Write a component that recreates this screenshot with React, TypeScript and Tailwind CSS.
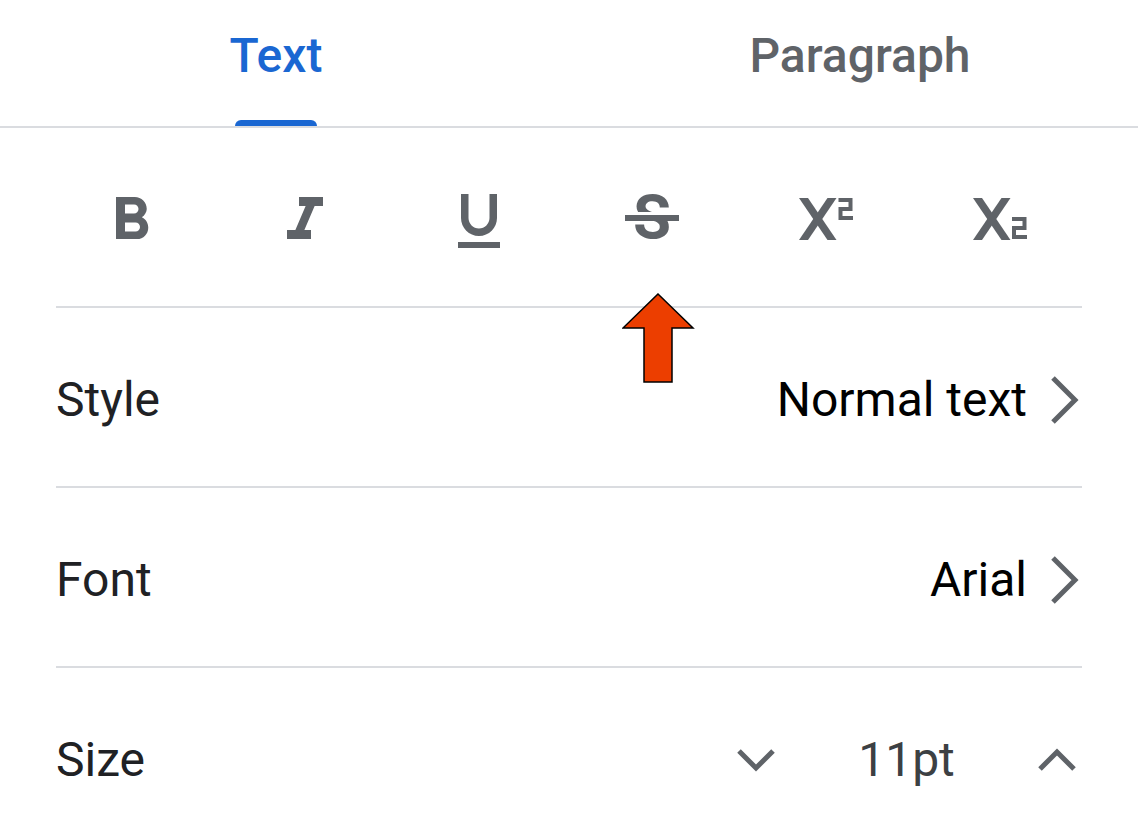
import React from 'react';

const ICON = '#5f6368';

const formatIcons: { key: string; d: string }[] = [
  {
    key: 'bold',
    d: 'M15.6 10.79c.97-.67 1.65-1.77 1.65-2.79 0-2.26-1.75-4-4-4H7v14h7.04c2.09 0 3.71-1.7 3.71-3.79 0-1.52-.86-2.82-2.15-3.42zM10 6.5h3c.83 0 1.5.67 1.5 1.5s-.67 1.5-1.5 1.5h-3v-3zm3.5 9H10v-3h3.5c.83 0 1.5.67 1.5 1.5s-.67 1.5-1.5 1.5z',
  },
  { key: 'italic', d: 'M10 4v3h2.21l-3.42 8H6v3h8v-3h-2.21l3.42-8H18V4z' },
  {
    key: 'underline',
    d: 'M12 17c3.31 0 6-2.69 6-6V3h-2.5v8c0 1.93-1.57 3.5-3.5 3.5S8.5 12.93 8.5 11V3H6v8c0 3.31 2.69 6 6 6zm-7 2v2h14v-2H5z',
  },
  {
    key: 'strike',
    d: 'M7.24 8.75c-.26-.48-.39-1.03-.39-1.67 0-.61.13-1.16.4-1.67.26-.5.63-.93 1.11-1.29.48-.35 1.05-.63 1.7-.83.66-.19 1.39-.29 2.18-.29.81 0 1.54.11 2.21.34.66.22 1.23.54 1.69.94.47.4.83.88 1.08 1.43.25.55.38 1.15.38 1.81h-3.01c0-.31-.05-.59-.15-.85-.09-.27-.24-.49-.44-.68-.2-.19-.45-.33-.75-.44-.3-.1-.66-.16-1.06-.16-.39 0-.74.04-1.03.13-.29.09-.53.21-.72.36-.19.16-.34.34-.44.55-.1.21-.15.43-.15.66 0 .48.25.88.74 1.21.38.25.77.48 1.41.7H7.39c-.05-.08-.11-.17-.15-.25zM21 12v-2H3v2h9.62c.18.07.4.14.55.2.37.17.66.34.87.51.21.17.35.36.43.57.07.2.11.43.11.69 0 .23-.05.45-.14.66-.09.2-.23.38-.42.53-.19.15-.42.26-.71.35-.29.08-.63.13-1.01.13-.43 0-.83-.04-1.18-.13s-.66-.23-.91-.42c-.25-.19-.45-.44-.59-.75-.14-.31-.25-.76-.25-1.21H6.4c0 .55.08 1.13.24 1.58.16.45.37.85.65 1.21.28.35.6.66.98.92.37.26.78.48 1.22.65.44.17.9.3 1.38.39.48.08.96.13 1.44.13.8 0 1.53-.09 2.18-.28s1.21-.45 1.67-.79c.46-.34.82-.77 1.07-1.27s.38-1.07.38-1.71c0-.6-.1-1.14-.31-1.61-.05-.11-.11-.23-.17-.33H21z',
  },
];

// X drawn as two slanted bars, shared by superscript and subscript
const XGlyph = () => (
  <>
    <polygon points="9,13 18,13 46.5,55 37.5,55" />
    <polygon points="37.5,13 46.5,13 18,55 9,55" />
  </>
);

const Superscript = () => (
  <svg width="72" height="72" viewBox="0 0 72 72" fill={ICON}>
    <XGlyph />
    <polyline
      points="48.5,15 60.5,15 60.5,24 50.5,24 50.5,33 63,33"
      fill="none"
      stroke={ICON}
      strokeWidth="4"
    />
  </svg>
);

const Subscript = () => (
  <svg width="72" height="72" viewBox="0 0 72 72" fill={ICON}>
    <XGlyph />
    <polyline
      points="48,34 60.5,34 60.5,43 50,43 50,52 63,52"
      fill="none"
      stroke={ICON}
      strokeWidth="4"
    />
  </svg>
);

const ChevronRight = () => (
  <svg width="32" height="52" viewBox="0 0 32 52" fill="none">
    <polyline points="5,4 27,26 5,48" stroke={ICON} strokeWidth="5" />
  </svg>
);

const ChevronDown = () => (
  <svg width="44" height="28" viewBox="0 0 44 28" fill="none">
    <polyline points="5,5 22,22 39,5" stroke={ICON} strokeWidth="5" />
  </svg>
);

const ChevronUp = () => (
  <svg width="44" height="28" viewBox="0 0 44 28" fill="none">
    <polyline points="5,23 22,6 39,23" stroke={ICON} strokeWidth="5" />
  </svg>
);

const Divider = () => <div className="mx-[56px] h-[2px] bg-[#dadce0]" />;

const NavRow = ({ label, value }: { label: string; value: string }) => (
  <div className="flex h-[178px] items-start justify-between pl-[56px] pr-[58px] pt-[64px]">
    <span className="text-[48px] leading-[56px] text-[#202124]">{label}</span>
    <div className="flex items-center gap-[21px]">
      <span className="text-[48px] leading-[56px] text-black">{value}</span>
      <ChevronRight />
    </div>
  </div>
);

export default function App() {
  return (
    <div
      className="relative h-[828px] w-[1138px] overflow-hidden bg-white"
      style={{ fontFamily: 'Roboto, "Noto Sans", sans-serif' }}
    >
      {/* tabs */}
      <div className="flex h-[128px] border-b-2 border-[#dadce0]">
        <div className="flex w-[552px] flex-col items-center pt-[28px]">
          <span className="text-[48px] font-medium leading-[56px] text-[#1a67d2]">Text</span>
          <div className="mt-auto h-[6px] w-[82px] rounded-t-[6px] bg-[#1a67d2]" />
        </div>
        <div className="ml-[30px] flex w-[556px] flex-col items-center pt-[28px]">
          <span className="text-[48px] font-medium leading-[56px] text-[#5f6368]">Paragraph</span>
        </div>
      </div>

      {/* format buttons */}
      <div className="grid h-[178px] grid-cols-6 pl-[44px] pr-[51px] pt-[57px]">
        {formatIcons.map((icon) => (
          <div key={icon.key} className="flex justify-center">
            <svg width="72" height="72" viewBox="0 0 24 24" fill={ICON}>
              <path d={icon.d} />
            </svg>
          </div>
        ))}
        <div className="flex justify-center">
          <Superscript />
        </div>
        <div className="flex justify-center">
          <Subscript />
        </div>
      </div>
      <Divider />

      <NavRow label="Style" value="Normal text" />
      <Divider />
      <NavRow label="Font" value="Arial" />
      <Divider />

      <div className="flex h-[178px] items-start justify-between pl-[56px] pr-[59px] pt-[64px]">
        <span className="text-[48px] leading-[56px] text-[#202124]">Size</span>
        <div className="flex h-[56px] items-center">
          <ChevronDown />
          <span className="w-[257px] text-center text-[48px] leading-[56px] text-[#3c4043]">11pt</span>
          <ChevronUp />
        </div>
      </div>

      {/* callout arrow */}
      <svg
        className="absolute left-[622px] top-[293px]"
        width="73"
        height="91"
        viewBox="0 0 73 91"
      >
        <polygon
          points="36,1 71,35 50,35 50,89 22,89 22,35 1,35"
          fill="#ec3e00"
          stroke="#000"
          strokeWidth="1.5"
        />
      </svg>
    </div>
  );
}
